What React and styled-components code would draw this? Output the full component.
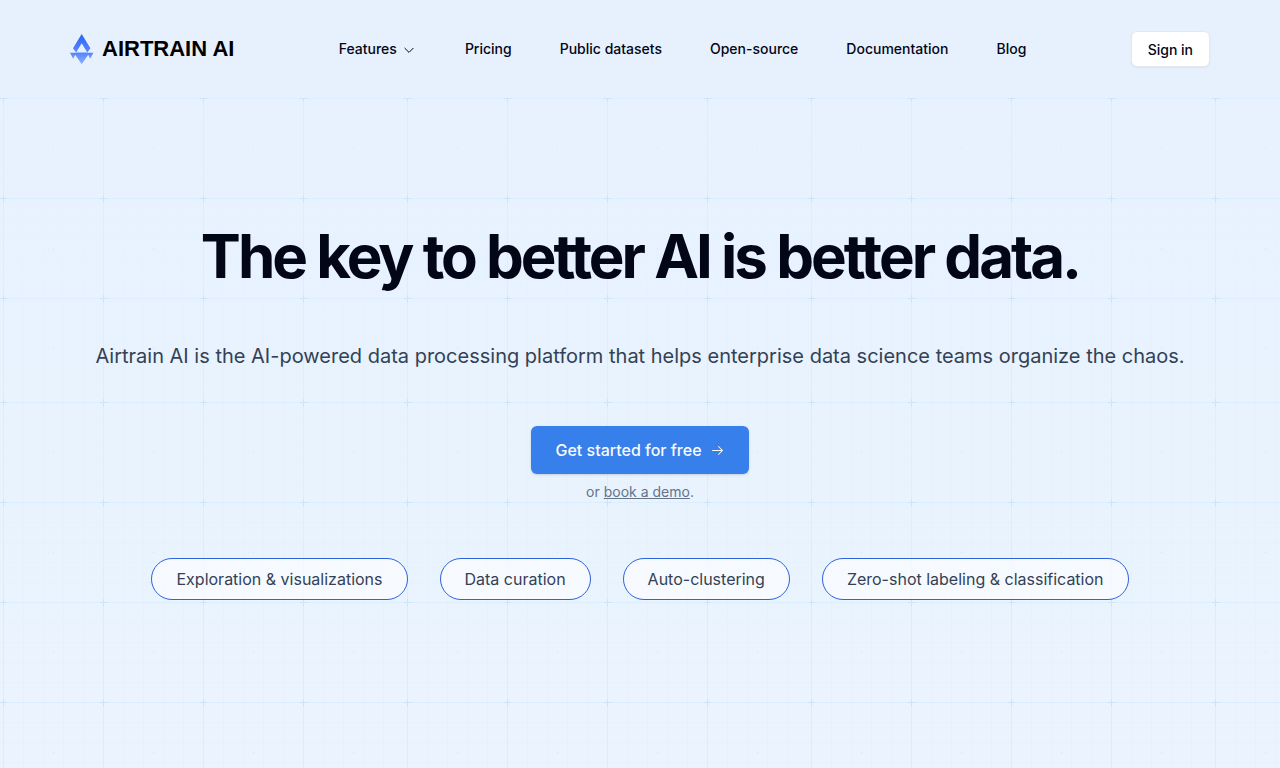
import React from 'react';
import styled, { createGlobalStyle } from 'styled-components';

const GlobalStyle = createGlobalStyle`
  *, *::before, *::after {
    box-sizing: border-box;
  }

  body {
    margin: 0;
    font-family: Inter, 'Liberation Sans', sans-serif;
    color: #020617;
    background-color: #e9f2fe;
    -webkit-font-smoothing: antialiased;
  }
`;

const Page = styled.div`
  position: relative;
  min-height: 100vh;
  overflow: hidden;
  background: linear-gradient(180deg, #e7f1fe 0%, #e8f3fe 50%, #ebf3fe 100%);
`;

const Backdrop = styled.svg`
  position: absolute;
  inset: 0;
  width: 100%;
  height: 100%;
  pointer-events: none;
`;

const Header = styled.header`
  position: relative;
  display: flex;
  align-items: center;
  justify-content: space-between;
  min-height: 98px;
  padding: 0 70px;
  background: #e7f1fe;
`;

const Brand = styled.a`
  display: flex;
  align-items: center;
  gap: 8px;
  color: #000;
  font-family: 'Liberation Sans', Arial, sans-serif;
  font-size: 22px;
  font-weight: 700;
  line-height: 32px;
  text-decoration: none;
`;

const Nav = styled.nav`
  display: flex;
  align-items: center;
  gap: 48px;
`;

const navItem = `
  display: flex;
  align-items: center;
  gap: 6px;
  padding: 0;
  border: 0;
  background: none;
  color: #020617;
  font-family: inherit;
  font-size: 14px;
  font-weight: 500;
  line-height: 20px;
  text-decoration: none;
  cursor: pointer;
`;

const NavLink = styled.a`
  ${navItem}
`;

const NavButton = styled.button`
  ${navItem}
`;

const SignIn = styled.a`
  padding: 8px 16px 6px;
  border: 1px solid #e2e8f0;
  border-radius: 6px;
  background: #fff;
  color: #020617;
  font-size: 14px;
  font-weight: 500;
  line-height: 20px;
  text-decoration: none;
  box-shadow: 0 1px 2px rgba(0, 0, 0, 0.05);
`;

const Hero = styled.main`
  position: relative;
  display: flex;
  flex-direction: column;
  align-items: center;
  padding: 128px 64px;
  text-align: center;
`;

const Title = styled.h1`
  margin: 0;
  font-size: 60px;
  font-weight: 700;
  line-height: 60px;
  letter-spacing: -0.05em;
`;

const Lead = styled.p`
  margin: 56px 0 0;
  color: #334155;
  font-size: 20px;
  line-height: 28px;
`;

const CallToAction = styled.a`
  display: flex;
  align-items: center;
  gap: 8px;
  margin-top: 56px;
  padding: 12px 24px;
  border-radius: 6px;
  background: #377fea;
  color: #f8fafc;
  font-size: 16px;
  font-weight: 500;
  line-height: 24px;
  text-decoration: none;
  box-shadow: 0 1px 3px rgba(0, 0, 0, 0.1), 0 1px 2px rgba(0, 0, 0, 0.06);
`;

const Note = styled.p`
  margin: 8px 0 0;
  color: #64748b;
  font-size: 14px;
  line-height: 20px;

  a {
    color: inherit;
  }
`;

const Topics = styled.ul`
  display: flex;
  flex-wrap: wrap;
  justify-content: center;
  gap: 32px;
  margin: 56px 0 0;
  padding: 0;
  list-style: none;
`;

const Topic = styled.li`
  padding: 8px 24px;
  border: 1px solid #2f62dd;
  border-radius: 21px;
  background: rgba(255, 255, 255, 0.6);
  color: #334155;
  font-size: 16px;
  line-height: 24px;
`;

const links = ['Pricing', 'Public datasets', 'Open-source', 'Documentation', 'Blog'];

const topics = [
  'Exploration & visualizations',
  'Data curation',
  'Auto-clustering',
  'Zero-shot labeling & classification',
];

// One tile is 404px: four 100px cells plus a 4px seam
const minor = [];
for (let n = 20; n < 400; n += 20) {
  if (n % 100 !== 0) minor.push(n);
}
const major = [0, 100, 200, 300];

const Grid = () => (
  <Backdrop aria-hidden="true">
    <defs>
      <pattern id="grid" x="-1" y="-6" width="404" height="404" patternUnits="userSpaceOnUse">
        <g transform="translate(4 4)">
          {minor.map((n) => (
            <path key={n} d={`M${n} -4h1v404h-1zM-4 ${n}h404v1h-404z`} fill="#e3f0fd" opacity="0.6" />
          ))}
          {major.map((n) => (
            <path key={n} d={`M${n} -4h1v404h-1zM-4 ${n}h404v1h-404z`} fill="#dcedfd" />
          ))}
          {major.map((x) =>
            major.map((y) => (
              <g key={`${x}-${y}`} fill="#cce3fa">
                <path d={`M${x - 3} ${y}h7v1h-7zM${x} ${y - 3}h1v7h-1z`} />
                <path d={`M${x + 50} ${y + 50}h1v1h-1z`} />
              </g>
            ))
          )}
        </g>
      </pattern>
    </defs>
    <rect width="100%" height="100%" fill="url(#grid)" />
  </Backdrop>
);

const Logo = () => (
  <svg width="24" height="32" viewBox="0 0 24 32" aria-hidden="true">
    <defs>
      <linearGradient id="mark" x1="0" y1="0" x2="0" y2="1">
        <stop offset="0" stopColor="#2a60fa" />
        <stop offset="1" stopColor="#5a8afc" />
      </linearGradient>
      <linearGradient id="tail" x1="0" y1="0" x2="0" y2="1">
        <stop offset="0" stopColor="#5584fb" />
        <stop offset="1" stopColor="#8db0ff" />
      </linearGradient>
    </defs>
    <path d="M11.7 1 20.4 15.2 17.3 19.6 11.7 10.3 6.1 19.6 3 15.2z" fill="url(#mark)" />
    <path d="M0 19.8h6.2l-3 6zM17.2 19.8h6.2l-3.2 6zM6 19.6h11.4l1 2-6.7 9.6-6.7-9.6z" fill="url(#tail)" />
  </svg>
);

const Chevron = () => (
  <svg width="14" height="12" viewBox="0 0 14 12" fill="none" stroke="currentColor" aria-hidden="true">
    <path d="M1.6 5 6 9.4 10.4 5" />
  </svg>
);

const Arrow = () => (
  <svg width="15" height="15" viewBox="0 0 15 15" fill="currentColor" aria-hidden="true">
    <path d="M8.15 3.15a.5.5 0 0 1 .7 0l4 4a.5.5 0 0 1 0 .7l-4 4a.5.5 0 0 1-.7-.7L11.29 8H2.5a.5.5 0 0 1 0-1h8.79L8.15 3.85a.5.5 0 0 1 0-.7z" />
  </svg>
);

const App = () => (
  <Page>
    <GlobalStyle />
    <Grid />
    <Header>
      <Brand href="#">
        <Logo />
        AIRTRAIN AI
      </Brand>
      <Nav>
        <NavButton type="button">
          Features
          <Chevron />
        </NavButton>
        {links.map((label) => (
          <NavLink key={label} href="#">
            {label}
          </NavLink>
        ))}
      </Nav>
      <SignIn href="#">Sign in</SignIn>
    </Header>
    <Hero>
      <Title>The key to better AI is better data.</Title>
      <Lead>
        Airtrain AI is the AI-powered data processing platform that helps enterprise data science
        teams organize the chaos.
      </Lead>
      <CallToAction href="#">
        Get started for free
        <Arrow />
      </CallToAction>
      <Note>
        or <a href="#">book a demo</a>.
      </Note>
      <Topics>
        {topics.map((topic) => (
          <Topic key={topic}>{topic}</Topic>
        ))}
      </Topics>
    </Hero>
  </Page>
);

export default App;
